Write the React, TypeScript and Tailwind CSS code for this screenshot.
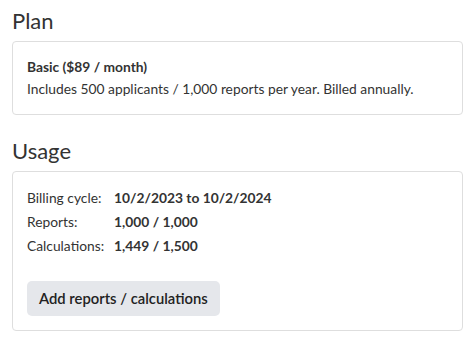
export default function App() {
  return (
    <div className="min-h-screen bg-white px-3 pt-[7px] font-['Lato',sans-serif] text-[#333]">
      <h2 className="text-[22px] leading-[28px]">Plan</h2>
      <div className="mt-[6px] rounded-[4px] border border-[#dedede] p-[14px] text-[13.8px] leading-[22px]">
        <p className="font-bold">Basic ($89 / month)</p>
        <p>Includes 500 applicants / 1,000 reports per year. Billed annually.</p>
      </div>

      <h2 className="mt-[22px] text-[22px] leading-[28px]">Usage</h2>
      <div className="mt-[6px] rounded-[4px] border border-[#dedede] p-[14px] text-[13.8px]">
        <div className="grid grid-cols-[auto_1fr] gap-x-[10px] leading-[24px]">
          <span>Billing cycle:</span>
          <span className="font-bold">10/2/2023 to 10/2/2024</span>
          <span>Reports:</span>
          <span className="font-bold">1,000 / 1,000</span>
          <span>Calculations:</span>
          <span className="font-bold">1,449 / 1,500</span>
        </div>
        <button
          type="button"
          className="mt-[23px] rounded-[5px] bg-[#e5e7eb] px-3 py-[7px] text-[14.8px] font-semibold leading-[21px] text-[#222]"
        >
          Add reports / calculations
        </button>
      </div>
    </div>
  );
}
